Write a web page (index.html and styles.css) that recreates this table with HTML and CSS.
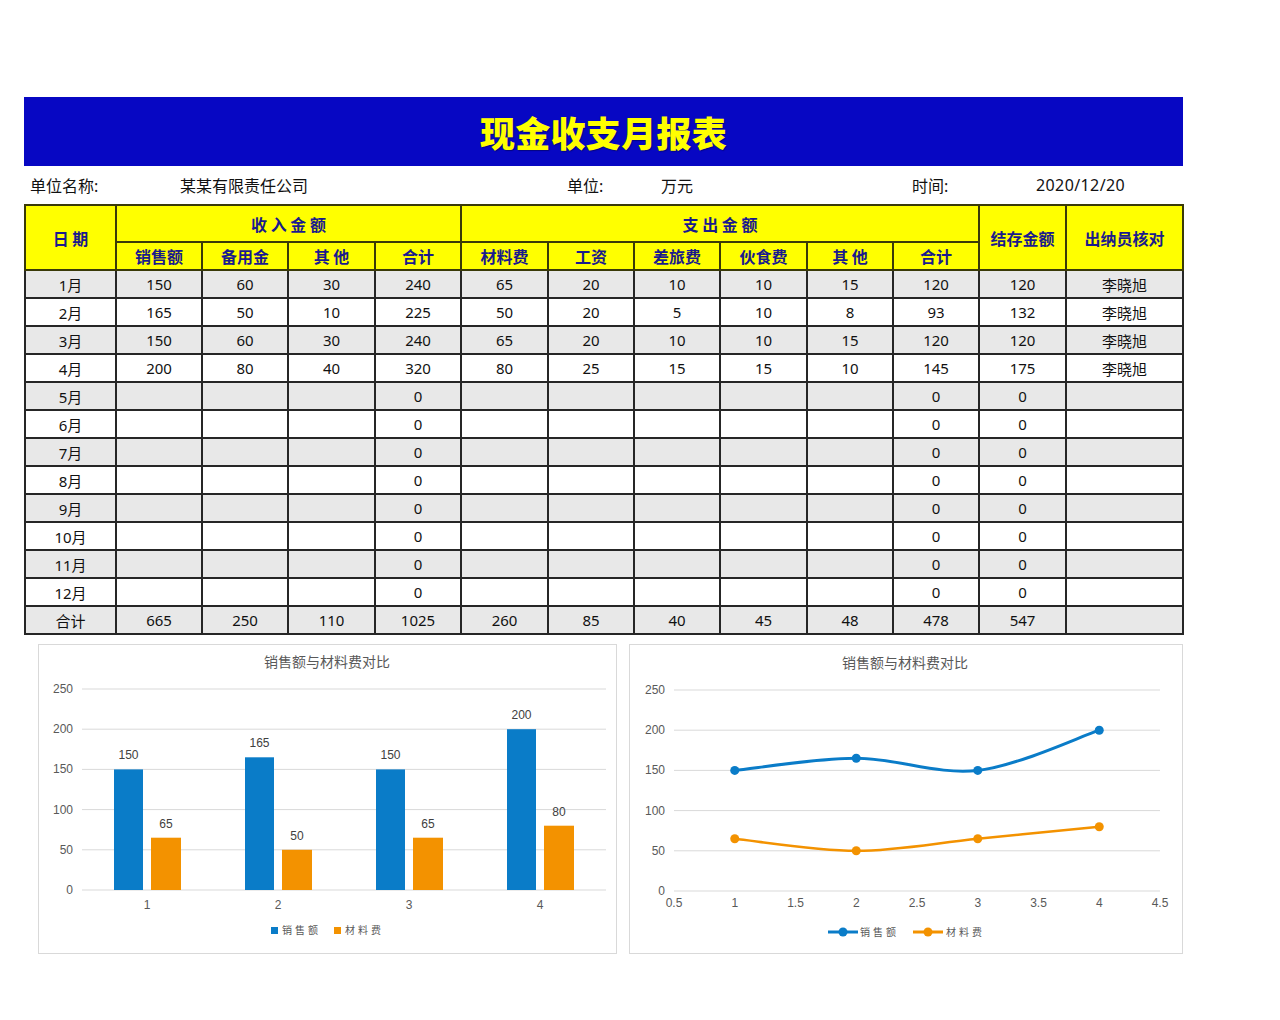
FILE: index.html
```html
<!DOCTYPE html>
<html lang="zh-CN">
<head>
<meta charset="utf-8">
<title>现金收支月报表</title>
<link rel="stylesheet" href="styles.css">
</head>
<body>
<div class="page">
  <div class="title-bar"><h1 class="title">现金收支月报表</h1></div>
  <div class="info-row">
    <span class="info info-l1">单位名称:</span>
    <span class="info info-v1">某某有限责任公司</span>
    <span class="info info-l2">单位:</span>
    <span class="info info-v2">万元</span>
    <span class="info info-l3">时间:</span>
    <span class="info info-v3">2020/12/20</span>
  </div>
  <table class="sheet">
    <colgroup>
      <col style="width:91px"><col style="width:86px"><col style="width:86px"><col style="width:87px"><col style="width:86px">
      <col style="width:87px"><col style="width:86px"><col style="width:86px"><col style="width:87px"><col style="width:86px"><col style="width:86px">
      <col style="width:87px"><col style="width:117px">
    </colgroup>
    <thead>
      <tr class="h1">
        <th rowspan="2">日 期</th>
        <th colspan="4">收 入 金 额</th>
        <th colspan="6">支 出 金 额</th>
        <th rowspan="2">结存金额</th>
        <th rowspan="2">出纳员核对</th>
      </tr>
      <tr class="h2">
        <th>销售额</th><th>备用金</th><th>其 他</th><th>合计</th>
        <th>材料费</th><th>工资</th><th>差旅费</th><th>伙食费</th><th>其 他</th><th>合计</th>
      </tr>
    </thead>
    <tbody>
      <tr class="odd"><td>1月</td><td>150</td><td>60</td><td>30</td><td>240</td><td>65</td><td>20</td><td>10</td><td>10</td><td>15</td><td>120</td><td>120</td><td>李晓旭</td></tr>
      <tr><td>2月</td><td>165</td><td>50</td><td>10</td><td>225</td><td>50</td><td>20</td><td>5</td><td>10</td><td>8</td><td>93</td><td>132</td><td>李晓旭</td></tr>
      <tr class="odd"><td>3月</td><td>150</td><td>60</td><td>30</td><td>240</td><td>65</td><td>20</td><td>10</td><td>10</td><td>15</td><td>120</td><td>120</td><td>李晓旭</td></tr>
      <tr><td>4月</td><td>200</td><td>80</td><td>40</td><td>320</td><td>80</td><td>25</td><td>15</td><td>15</td><td>10</td><td>145</td><td>175</td><td>李晓旭</td></tr>
      <tr class="odd"><td>5月</td><td></td><td></td><td></td><td>0</td><td></td><td></td><td></td><td></td><td></td><td>0</td><td>0</td><td></td></tr>
      <tr><td>6月</td><td></td><td></td><td></td><td>0</td><td></td><td></td><td></td><td></td><td></td><td>0</td><td>0</td><td></td></tr>
      <tr class="odd"><td>7月</td><td></td><td></td><td></td><td>0</td><td></td><td></td><td></td><td></td><td></td><td>0</td><td>0</td><td></td></tr>
      <tr><td>8月</td><td></td><td></td><td></td><td>0</td><td></td><td></td><td></td><td></td><td></td><td>0</td><td>0</td><td></td></tr>
      <tr class="odd"><td>9月</td><td></td><td></td><td></td><td>0</td><td></td><td></td><td></td><td></td><td></td><td>0</td><td>0</td><td></td></tr>
      <tr><td>10月</td><td></td><td></td><td></td><td>0</td><td></td><td></td><td></td><td></td><td></td><td>0</td><td>0</td><td></td></tr>
      <tr class="odd"><td>11月</td><td></td><td></td><td></td><td>0</td><td></td><td></td><td></td><td></td><td></td><td>0</td><td>0</td><td></td></tr>
      <tr><td>12月</td><td></td><td></td><td></td><td>0</td><td></td><td></td><td></td><td></td><td></td><td>0</td><td>0</td><td></td></tr>
      <tr class="odd total"><td>合计</td><td>665</td><td>250</td><td>110</td><td>1025</td><td>260</td><td>85</td><td>40</td><td>45</td><td>48</td><td>478</td><td>547</td><td></td></tr>
    </tbody>
  </table>
  <div class="charts">
    <div class="chart chart-bar">
      <svg width="579" height="309" viewBox="0 0 579 309">
        <text class="c-title" x="289" y="23">销售额与材料费对比</text>
        <g class="grid">
          <line x1="44" y1="45" x2="568" y2="45"/>
          <line x1="44" y1="85.2" x2="568" y2="85.2"/>
          <line x1="44" y1="125.4" x2="568" y2="125.4"/>
          <line x1="44" y1="165.6" x2="568" y2="165.6"/>
          <line x1="44" y1="205.8" x2="568" y2="205.8"/>
          <line x1="44" y1="246" x2="568" y2="246"/>
        </g>
        <g class="ylab">
          <text x="35" y="49">250</text>
          <text x="35" y="89">200</text>
          <text x="35" y="129">150</text>
          <text x="35" y="170">100</text>
          <text x="35" y="210">50</text>
          <text x="35" y="250">0</text>
        </g>
        <g class="bar-blue">
          <rect x="76" y="125.4" width="29" height="120.6"/>
          <rect x="207" y="113.3" width="29" height="132.7"/>
          <rect x="338" y="125.4" width="29" height="120.6"/>
          <rect x="469" y="85.2" width="29" height="160.8"/>
        </g>
        <g class="bar-orange">
          <rect x="113" y="193.7" width="30" height="52.3"/>
          <rect x="244" y="205.8" width="30" height="40.2"/>
          <rect x="375" y="193.7" width="30" height="52.3"/>
          <rect x="506" y="181.7" width="30" height="64.3"/>
        </g>
        <g class="vlab">
          <text x="90.5" y="115">150</text>
          <text x="128" y="184">65</text>
          <text x="221.5" y="103">165</text>
          <text x="259" y="196">50</text>
          <text x="352.5" y="115">150</text>
          <text x="390" y="184">65</text>
          <text x="483.5" y="75">200</text>
          <text x="521" y="172">80</text>
        </g>
        <g class="xlab">
          <text x="109" y="265">1</text>
          <text x="240" y="265">2</text>
          <text x="371" y="265">3</text>
          <text x="502" y="265">4</text>
        </g>
        <g class="legend">
          <rect x="233" y="283" width="7" height="7" fill="#0a7cc8"/>
          <text x="244" y="290">销售额</text>
          <rect x="296" y="283" width="7" height="7" fill="#f39200"/>
          <text x="307" y="290">材料费</text>
        </g>
      </svg>
    </div>
    <div class="chart chart-line">
      <svg width="554" height="309" viewBox="0 0 554 309">
        <text class="c-title" x="276" y="24">销售额与材料费对比</text>
        <g class="grid">
          <line x1="45" y1="46" x2="531" y2="46"/>
          <line x1="45" y1="86.2" x2="531" y2="86.2"/>
          <line x1="45" y1="126.4" x2="531" y2="126.4"/>
          <line x1="45" y1="166.6" x2="531" y2="166.6"/>
          <line x1="45" y1="206.8" x2="531" y2="206.8"/>
          <line x1="45" y1="247" x2="531" y2="247"/>
        </g>
        <g class="ylab">
          <text x="36" y="50">250</text>
          <text x="36" y="90">200</text>
          <text x="36" y="130">150</text>
          <text x="36" y="171">100</text>
          <text x="36" y="211">50</text>
          <text x="36" y="251">0</text>
        </g>
        <g class="xlab">
          <text x="45" y="263">0.5</text>
          <text x="105.75" y="263">1</text>
          <text x="166.5" y="263">1.5</text>
          <text x="227.25" y="263">2</text>
          <text x="288" y="263">2.5</text>
          <text x="348.75" y="263">3</text>
          <text x="409.5" y="263">3.5</text>
          <text x="470.25" y="263">4</text>
          <text x="531" y="263">4.5</text>
        </g>
        <path class="ln-blue" d="M105.75 126.4 C126 124.4 186.75 114.3 227.25 114.3 C268 114.3 308.25 131.1 348.75 126.4 C389.25 121.7 450 92.9 470.25 86.2"/>
        <path class="ln-orange" d="M105.75 194.7 C126 196.7 186.75 206.8 227.25 206.8 C268 206.8 308.25 198.7 348.75 194.7 C389.25 190.7 450 184.7 470.25 182.7"/>
        <g fill="#0a7cc8">
          <circle cx="105.75" cy="126.4" r="4.5"/>
          <circle cx="227.25" cy="114.3" r="4.5"/>
          <circle cx="348.75" cy="126.4" r="4.5"/>
          <circle cx="470.25" cy="86.2" r="4.5"/>
        </g>
        <g fill="#f39200">
          <circle cx="105.75" cy="194.7" r="4.5"/>
          <circle cx="227.25" cy="206.8" r="4.5"/>
          <circle cx="348.75" cy="194.7" r="4.5"/>
          <circle cx="470.25" cy="182.7" r="4.5"/>
        </g>
        <g class="legend">
          <line x1="199" y1="288" x2="229" y2="288" stroke="#0a7cc8" stroke-width="3"/>
          <circle cx="214" cy="288" r="4.5" fill="#0a7cc8"/>
          <text x="231" y="292">销售额</text>
          <line x1="284" y1="288" x2="314" y2="288" stroke="#f39200" stroke-width="3"/>
          <circle cx="299" cy="288" r="4.5" fill="#f39200"/>
          <text x="317" y="292">材料费</text>
        </g>
      </svg>
    </div>
  </div>
</div>
</body>
</html>
```
FILE: styles.css
```css
* { box-sizing: border-box; }
html, body { margin: 0; padding: 0; background: #ffffff; }
body {
  font-family: "Noto Sans", "Noto Sans CJK SC", sans-serif;
  color: #111;
}
.page {
  width: 1183px;
  padding: 97px 0 0 24px;
}
.title-bar {
  height: 69px;
  background: #0707c3;
  display: flex;
  align-items: center;
  justify-content: center;
}
.title {
  margin: 0;
  font-family: "Noto Sans CJK SC", sans-serif;
  font-weight: 900;
  font-size: 35px;
  color: #ffff00;
  letter-spacing: 0.3px;
  text-shadow: 1px 1px 1px rgba(0,0,0,0.35);
  line-height: 1;
}
.info-row {
  height: 38px;
  display: flex;
  align-items: center;
  padding-left: 6px;
  font-size: 16px;
  font-family: "Noto Sans", "Noto Sans CJK SC", sans-serif;
}
.info { display: block; white-space: nowrap; }
.info-l1 { width: 150px; }
.info-v1 { width: 387px; }
.info-l2 { width: 94px; }
.info-v2 { width: 251px; }
.info-l3 { width: 124px; }
.info-v3 { letter-spacing: 0.4px; }
.sheet {
  border-collapse: collapse;
  table-layout: fixed;
  width: 1158px;
  border: 2px solid #1a1a1a;
}
.sheet th, .sheet td {
  border: 2px solid #262626;
  text-align: center;
  padding: 0;
}
.sheet th {
  background: #ffff00;
  color: #1a1a8c;
  font-family: "Noto Sans CJK SC", sans-serif;
  font-weight: 700;
  font-size: 16px;
  border-color: #3a3a08;
}
.sheet tr.h1 th { height: 37px; }
.sheet tr.h2 th { height: 28px; }
.sheet td {
  height: 28px;
  font-size: 15px;
  color: #111;
  background: #ffffff;
}
.sheet tr.odd td { background: #e8e8e8; }
.charts {
  display: flex;
  gap: 12px;
  margin-top: 9px;
  padding-left: 14px;
}
.chart {
  border: 1px solid #d9d9d9;
  height: 310px;
  background: #fff;
}
.chart svg { display: block; margin: -1px 0 0 -1px; }
.chart-bar { width: 579px; }
.chart-line { width: 554px; }
.c-title {
  font-family: "Noto Sans CJK SC", sans-serif;
  font-size: 14px;
  fill: #595959;
  text-anchor: middle;
}
.grid line { stroke: #d9d9d9; stroke-width: 1; }
.ylab text {
  font-family: "Liberation Sans", sans-serif;
  font-size: 12px;
  fill: #595959;
  text-anchor: end;
}
.xlab text, .vlab text {
  font-family: "Liberation Sans", sans-serif;
  font-size: 12px;
  fill: #595959;
  text-anchor: middle;
}
.vlab text { fill: #404040; }
.bar-blue rect { fill: #0a7cc8; }
.bar-orange rect { fill: #f39200; }
.ln-blue { fill: none; stroke: #0a7cc8; stroke-width: 3; stroke-linecap: round; }
.ln-orange { fill: none; stroke: #f39200; stroke-width: 2.5; stroke-linecap: round; }
.legend text {
  font-family: "Noto Sans CJK SC", sans-serif;
  font-size: 10px;
  fill: #595959;
  letter-spacing: 3px;
}
```
